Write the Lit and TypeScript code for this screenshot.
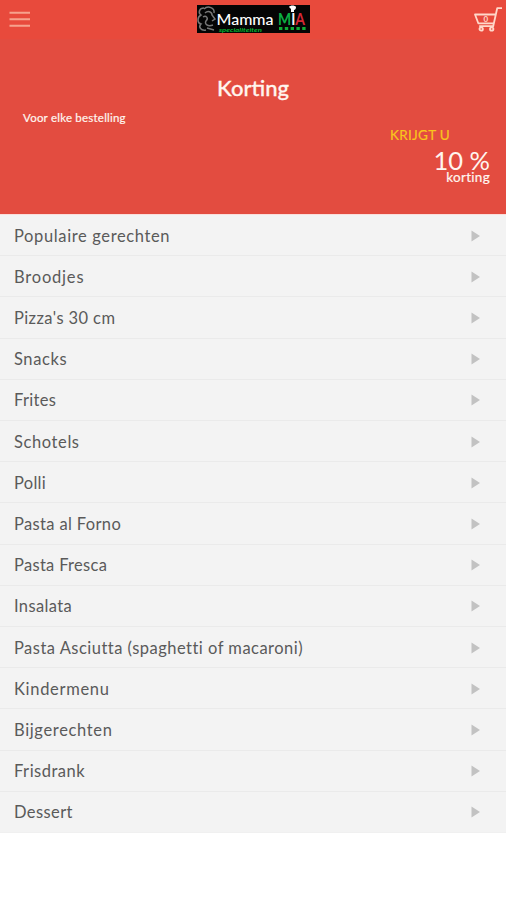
import { LitElement, html, css } from "lit";
import { customElement } from "lit/decorators.js";

// Category name and its letter spacing in pixels.
const CATEGORIES: [string, number][] = [
  ["Populaire gerechten", 0.63],
  ["Broodjes", 0.8],
  ["Pizza's 30 cm", 0.4],
  ["Snacks", 0.6],
  ["Frites", 0.3],
  ["Schotels", 0.6],
  ["Polli", 0.3],
  ["Pasta al Forno", 0.35],
  ["Pasta Fresca", 0.3],
  ["Insalata", 0.35],
  ["Pasta Asciutta (spaghetti of macaroni)", 0.48],
  ["Kindermenu", 0.68],
  ["Bijgerechten", 0.65],
  ["Frisdrank", 0.5],
  ["Dessert", 0.4],
];

@customElement("app-root")
export class AppRoot extends LitElement {
  static styles = css`
    :host {
      display: block;
      height: 900px;
      background: #fff;
      font-family: Lato, "Open Sans", sans-serif;
      overflow: hidden;
    }
    .top {
      height: 214px;
      box-sizing: border-box;
      background: #e34c40;
      color: #fff5ef;
      display: flex;
      flex-direction: column;
    }
    .bar {
      height: 39px;
      background: #e84a3c;
      display: grid;
      grid-template-columns: 197px 113px 1fr;
    }
    .menu {
      display: block;
      margin: 10px 0 0 8px;
    }
    .logo {
      display: block;
      margin-top: 5px;
    }
    .cart {
      display: block;
      justify-self: end;
      margin: 5px 3px 0 0;
    }
    .title {
      margin: 35px 0 0;
      text-align: center;
      font-size: 22px;
      line-height: 28px;
      font-weight: 500;
      -webkit-text-stroke: 0.3px #fff5ef;
    }
    .sub {
      margin: 8px 0 0 23px;
      font-size: 11.5px;
      line-height: 16px;
      letter-spacing: 0.22px;
      -webkit-text-stroke: 0.2px #fff5ef;
    }
    .deal {
      display: flex;
      flex-direction: column;
      align-items: flex-end;
      padding-right: 16px;
    }
    .get {
      color: #f9c51c;
      font-size: 13.5px;
      line-height: 18px;
      letter-spacing: 0.3px;
      margin-right: 40px;
      -webkit-text-stroke: 0.2px #f9c51c;
    }
    .pct {
      font-size: 25.5px;
      line-height: 20px;
      margin-top: 6px;
    }
    .off {
      font-size: 13.5px;
      line-height: 14px;
      letter-spacing: 0.3px;
      -webkit-text-stroke: 0.2px #fff5ef;
    }
    .list {
      list-style: none;
      margin: 0;
      padding: 0;
      height: 619px;
      box-sizing: border-box;
      border-top: 1px solid #fbdedb;
      background: #f3f3f3;
      display: grid;
      grid-template-rows: repeat(15, 1fr);
    }
    .row {
      display: flex;
      align-items: center;
      justify-content: space-between;
      padding: 1px 25px 0 14px;
      box-sizing: border-box;
      border-bottom: 1px solid #eaeaea;
      color: #5a5a5a;
      font-size: 16.5px;
      line-height: 20px;
      white-space: nowrap;
    }
    .row:last-child {
      border-bottom-color: #f0f0f0;
    }
    .arrow {
      display: block;
    }
  `;

  render() {
    return html`
      <header class="top">
        <div class="bar">
          <svg class="menu" width="24" height="20" viewBox="0 0 24 20">
            <path d="M1.5 2.7H22M1.5 9.2H22M1.5 15.8H22" stroke="#f6a28d" stroke-width="2" />
          </svg>
          <svg class="logo" width="113" height="28" viewBox="0 0 113 28">
            <rect width="113" height="28" fill="#050505" />
            <g fill="none" stroke="#777" stroke-width="1.5">
              <path d="M7 3C2 3 1 8 4 10C0 12 0 18 4 19C1 22 4 26 9 25" />
              <path d="M7 4C11 0 18 3 17 8M8 8C11 5 15 7 15 10L18 14L15 16M6 12C9 10 12 13 9 16C7 19 11 22 16 20M10 23L17 25" />
            </g>
            <text x="19.5" y="20" textLength="57" lengthAdjust="spacingAndGlyphs" fill="#fff" font-family="Lato" font-size="15.5" font-weight="500">Mamma</text>
            <text x="22" y="26.6" textLength="43" lengthAdjust="spacingAndGlyphs" fill="#08b732" font-family="Lato" font-size="6" font-style="italic" font-weight="700">specialiteiten</text>
            <text x="81" y="20" textLength="27" lengthAdjust="spacingAndGlyphs" font-family="Lato" font-size="17" font-weight="700"><tspan fill="#0bae43">M</tspan><tspan fill="#f4f4f4">I</tspan><tspan fill="#d52835">A</tspan></text>
            <path d="M92 2C93 0 98 0 99 2C99 4 98 5 97 5V7H94V4Z" fill="#fff" />
            <path d="M82 23.5H109" stroke="#11ad35" stroke-width="3" stroke-dasharray="3.4 2.4" />
          </svg>
          <svg class="cart" width="30" height="28" viewBox="0 0 30 28" fill="none" stroke="#ffd8ca" stroke-width="1.8">
            <path d="M29 3.2H24.2L20.2 21.2H6.2M22.5 9.5H2L5.3 18.3H20.5" stroke-linejoin="round" />
            <circle cx="8.2" cy="24" r="1.7" />
            <circle cx="18.7" cy="24" r="1.7" />
            <text x="12.8" y="17.2" text-anchor="middle" fill="#ffd8ca" stroke="none" font-family="Lato" font-size="8" font-weight="700">0</text>
          </svg>
        </div>
        <h1 class="title">Korting</h1>
        <div class="sub">Voor elke bestelling</div>
        <div class="deal">
          <div class="get">KRIJGT U</div>
          <div class="pct">10 %</div>
          <div class="off">korting</div>
        </div>
      </header>
      <ul class="list">
        ${CATEGORIES.map(
          ([name, spacing]) => html`
            <li class="row">
              <span style="letter-spacing:${spacing}px">${name}</span>
              <svg class="arrow" width="10" height="12" viewBox="0 0 10 12">
                <path d="M.5 .5L9 6L.5 11.5Z" fill="#c2c2c2" />
              </svg>
            </li>
          `,
        )}
      </ul>
    `;
  }
}
